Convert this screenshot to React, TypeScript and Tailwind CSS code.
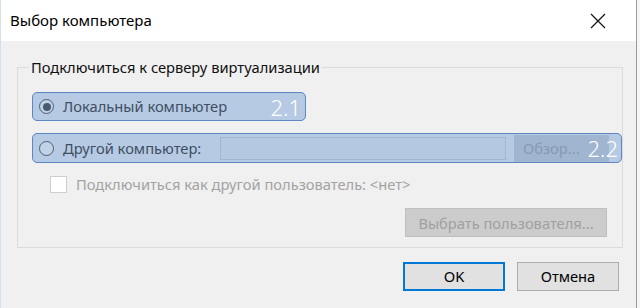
import React from "react";

const font = { fontFamily: '"Noto Sans", "Open Sans", sans-serif' };

const Radio = ({ checked }: { checked?: boolean }) => (
  <span className="flex h-[15px] w-[15px] shrink-0 items-center justify-center rounded-full border border-[#4d5d73] bg-[#c2d2e6]">
    {checked && <span className="h-[8px] w-[8px] rounded-full bg-[#4a5a70]" />}
  </span>
);

const App = () => {
  return (
    <div className="flex h-[308px] w-[640px] overflow-hidden bg-[#f0f0f0]" style={font}>
      <div className="flex w-[636px] flex-col border-l border-[#d7dfe9]">
        {/* title bar */}
        <div className="flex h-[41px] shrink-0 items-center justify-between bg-white pl-[9px] pr-[30px]">
          <span className="text-[15px] text-black">Выбор компьютера</span>
          <svg width="16" height="16" viewBox="0 0 16 16" className="mt-[1px]">
            <path d="M1 1 L15 15 M15 1 L1 15" stroke="#111" strokeWidth="1.2" />
          </svg>
        </div>

        {/* body */}
        <div className="flex flex-1 flex-col bg-[#f0f0f0] pl-[16px]">
          <fieldset className="mt-[16px] h-[191px] w-[605px] border border-[#dcdcdc]">
            <legend className="ml-[11px] px-[2px] text-[14.7px] leading-[20px] text-[#111]">
              Подключиться к серверу виртуализации
            </legend>

            <div className="ml-[14px] mt-[15px] flex h-[29px] w-[274px] items-center rounded-[5px] border border-[#5c86c4] bg-[#b6cae3] pl-[6px] pr-[4px]">
              <Radio checked />
              <span className="ml-[9px] text-[14.7px] text-[#3f4f64]">Локальный компьютер</span>
              <span className="ml-auto text-[22px] font-light leading-none text-white">2.1</span>
            </div>

            <div className="relative ml-[14px] mt-[12px] flex h-[30px] w-[590px] items-center rounded-[5px] border border-[#5c86c4] bg-[#b6cae3] pl-[6px]">
              <Radio />
              <span className="ml-[9px] text-[14.7px] text-[#3f4f64]">Другой компьютер:</span>
              <div className="ml-auto h-[23px] w-[286px] border border-[#a3b6cf] bg-[#b4c8e1]" />
              <div className="ml-[8px] mr-[12px] flex h-[27px] w-[95px] items-center bg-[#a0b5d0] pl-[9px] text-[14.7px] text-[#8799b4]">
                Обзор...
              </div>
              <span className="absolute right-[3px] top-[1px] text-[22px] font-light leading-[26px] text-white">2.2</span>
            </div>

            <div className="ml-[32px] mt-[10px] flex items-center">
              <span className="h-[17px] w-[17px] border border-[#cfcfcf] bg-white" />
              <span className="ml-[9px] text-[14.7px] text-[#a3a3a3]">
                Подключиться как другой пользователь: &lt;нет&gt;
              </span>
            </div>

            <div className="mr-[15px] mt-[13px] flex justify-end">
              <div className="flex h-[29px] w-[202px] items-center justify-center border border-[#bfbfbf] bg-[#cccccc] text-[14.7px] text-[#a0a0a0]">
                Выбрать пользователя...
              </div>
            </div>
          </fieldset>

          <div className="mt-[14px] flex justify-end gap-[12px] pr-[17px]">
            <div className="flex h-[29px] w-[102px] items-center justify-center border-2 border-[#0078d7] bg-[#e1e1e1] text-[14.7px] text-black">
              OK
            </div>
            <div className="flex h-[29px] w-[102px] items-center justify-center border border-[#adadad] bg-[#e1e1e1] text-[14.7px] text-black">
              Отмена
            </div>
          </div>
        </div>
      </div>
      <div className="w-[1px] bg-[#9a9a9a]" />
      <div className="flex-1 bg-[#f6f6f6]" />
    </div>
  );
};

export default App;
